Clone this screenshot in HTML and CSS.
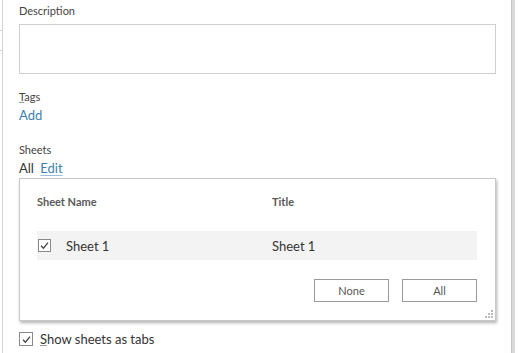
FILE: index.html
```html
<!DOCTYPE html>
<html lang="en">
<head>
  <meta charset="UTF-8" />
  <title>Sheet Properties</title>
  <link rel="stylesheet" href="styles.css">
</head>
<body>
  <div class="page">
    <span class="tick tick-top"></span>
    <span class="tick tick-bottom"></span>

    <div class="label first">Description</div>
    <div class="textarea"></div>

    <div class="label gap"><u>T</u>ags</div>
    <div class="link-line"><a class="link">Add</a></div>

    <div class="label gap-lg">Sheets</div>
    <div class="link-line">All <a class="link edit">Edit</a></div>

    <div class="sheet-box">
      <div class="sheet-grid head">
        <div>Sheet Name</div>
        <div>Title</div>
      </div>
      <div class="sheet-grid row">
        <div class="name">
          <span class="check">
            <svg width="11" height="11" viewBox="0 0 11 11"><path d="M2 5.8 L4.4 8.2 L9 2.6" fill="none" stroke="#444" stroke-width="1.3"/></svg>
          </span>
          Sheet 1
        </div>
        <div>Sheet 1</div>
      </div>
      <div class="actions">
        <button>None</button>
        <button>All</button>
      </div>
      <svg class="grip" width="8" height="8" viewBox="0 0 8 8">
        <rect x="6" y="0" width="2" height="2" fill="#bbb"/>
        <rect x="3" y="3" width="2" height="2" fill="#bbb"/>
        <rect x="6" y="3" width="2" height="2" fill="#bbb"/>
        <rect x="0" y="6" width="2" height="2" fill="#bbb"/>
        <rect x="3" y="6" width="2" height="2" fill="#bbb"/>
        <rect x="6" y="6" width="2" height="2" fill="#bbb"/>
      </svg>
    </div>

    <label class="tabs-option">
      <span class="check">
        <svg width="11" height="11" viewBox="0 0 11 11"><path d="M2 5.8 L4.4 8.2 L9 2.6" fill="none" stroke="#444" stroke-width="1.3"/></svg>
      </span>
      <span><u>S</u>how sheets as tabs</span>
    </label>
  </div>
</body>
</html>
```

FILE: styles.css
```css
html, body {
  margin: 0;
  background: #fff;
}
body {
  font-family: 'Lato', 'Open Sans', sans-serif;
  color: #333;
  width: 518px;
  height: 353px;
  overflow: hidden;
}
u {
  text-decoration-color: #999;
}
.page {
  position: relative;
  box-sizing: border-box;
  margin-left: 2px;
  width: 513px;
  height: 353px;
  padding: 0 0 0 16px;
  border-left: 1px solid #d4d4d4;
  border-right: 3px solid #dadada;
  box-shadow: inset -1px 0 0 #c4c4c4;
}
.tick {
  position: absolute;
  left: -3px;
  width: 3px;
  height: 1px;
  background: #d4d4d4;
}
.tick-top { top: 30px; }
.tick-bottom { top: 50px; }
.label {
  font-size: 11px;
  line-height: 14px;
  color: #444;
}
.label.first { padding-top: 4px; }
.label.gap { margin-top: 16px; }
.label.gap-lg { margin-top: 19px; }
.textarea {
  margin-top: 6px;
  width: 477px;
  height: 50px;
  box-sizing: border-box;
  border: 1px solid #cfcfcf;
}
.link-line {
  margin-top: 2px;
  font-size: 13px;
  line-height: 18px;
  color: #333;
}
.link {
  color: #3d7fb3;
}
.edit {
  margin-left: 3px;
  text-decoration: underline;
  text-decoration-color: #9cc0dc;
  text-underline-offset: 2px;
}
.sheet-box {
  position: relative;
  margin-top: 1px;
  width: 477px;
  height: 143px;
  box-sizing: border-box;
  border: 1px solid #c8c8c8;
  padding: 16px 18px 0 17px;
  box-shadow: 1px 2px 3px rgba(0, 0, 0, 0.3);
}
.sheet-grid {
  display: grid;
  grid-template-columns: 235px 1fr;
}
.head {
  font-size: 11px;
  line-height: 14px;
  font-weight: 700;
  color: #5a5a5a;
}
.row {
  margin-top: 22px;
  height: 29px;
  align-items: center;
  background: #f3f3f3;
  font-size: 13px;
  color: #333;
}
.name {
  display: flex;
  align-items: center;
  gap: 15px;
  padding-left: 1px;
}
.check {
  display: inline-flex;
  align-items: center;
  justify-content: center;
  width: 13px;
  height: 13px;
  box-sizing: border-box;
  border: 1px solid #8a8a8a;
  background: #fff;
}
.actions {
  display: flex;
  justify-content: flex-end;
  gap: 13px;
  margin-top: 19px;
}
.actions button {
  width: 75px;
  height: 23px;
  background: #fff;
  border: 1px solid #9a9a9a;
  border-radius: 0;
  font-family: inherit;
  font-size: 11px;
  color: #555;
  padding: 0;
}
.grip {
  position: absolute;
  right: 2px;
  bottom: 2px;
}
.tabs-option {
  display: flex;
  align-items: center;
  gap: 7px;
  margin-top: 10px;
  font-size: 13px;
  color: #333;
}
.tabs-option .check {
  width: 14px;
  height: 14px;
}
```
